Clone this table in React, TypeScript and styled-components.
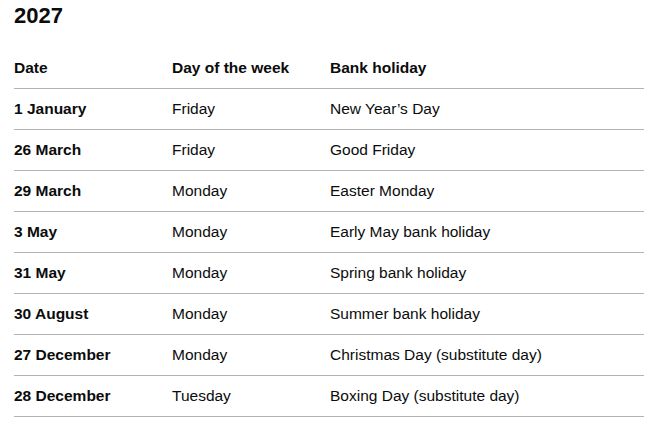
import React from 'react';
import styled, { createGlobalStyle } from 'styled-components';

const GlobalStyle = createGlobalStyle`
    body {
        margin: 0;
        background: #ffffff;
        font-family: "Liberation Sans", Arial, sans-serif;
        color: #0b0c0c;
    }
`;

const Page = styled.div`
    padding: 0 13px 0 14px;
`;

const Heading = styled.h2`
    margin: 0 0 16px;
    font-size: 22px;
    line-height: 32px;
    font-weight: 700;
`;

const Table = styled.table`
    width: 100%;
    border-collapse: collapse;
    border-spacing: 0;
    font-size: 15.5px;
`;

const Cell = styled.td<{ $bold?: boolean; $width?: number }>`
    padding: 10px 20px 10px 0;
    line-height: 20px;
    text-align: left;
    vertical-align: top;
    border-bottom: 1px solid #b1b4b6;
    font-weight: ${(p) => (p.$bold ? 700 : 400)};
    width: ${(p) => (p.$width ? `${p.$width}px` : 'auto')};
`;

const HeadCell = styled(Cell).attrs({ as: 'th' })``;

const rows = [
    ['1 January', 'Friday', 'New Year’s Day'],
    ['26 March', 'Friday', 'Good Friday'],
    ['29 March', 'Monday', 'Easter Monday'],
    ['3 May', 'Monday', 'Early May bank holiday'],
    ['31 May', 'Monday', 'Spring bank holiday'],
    ['30 August', 'Monday', 'Summer bank holiday'],
    ['27 December', 'Monday', 'Christmas Day (substitute day)'],
    ['28 December', 'Tuesday', 'Boxing Day (substitute day)'],
];

export default function App() {
    return (
        <Page>
            <GlobalStyle />
            <Heading>2027</Heading>
            <Table>
                <thead>
                    <tr>
                        <HeadCell $bold $width={138}>Date</HeadCell>
                        <HeadCell $bold $width={138}>Day of the week</HeadCell>
                        <HeadCell $bold>Bank holiday</HeadCell>
                    </tr>
                </thead>
                <tbody>
                    {rows.map(([date, day, name]) => (
                        <tr key={date}>
                            <Cell $bold>{date}</Cell>
                            <Cell>{day}</Cell>
                            <Cell>{name}</Cell>
                        </tr>
                    ))}
                </tbody>
            </Table>
        </Page>
    );
}
